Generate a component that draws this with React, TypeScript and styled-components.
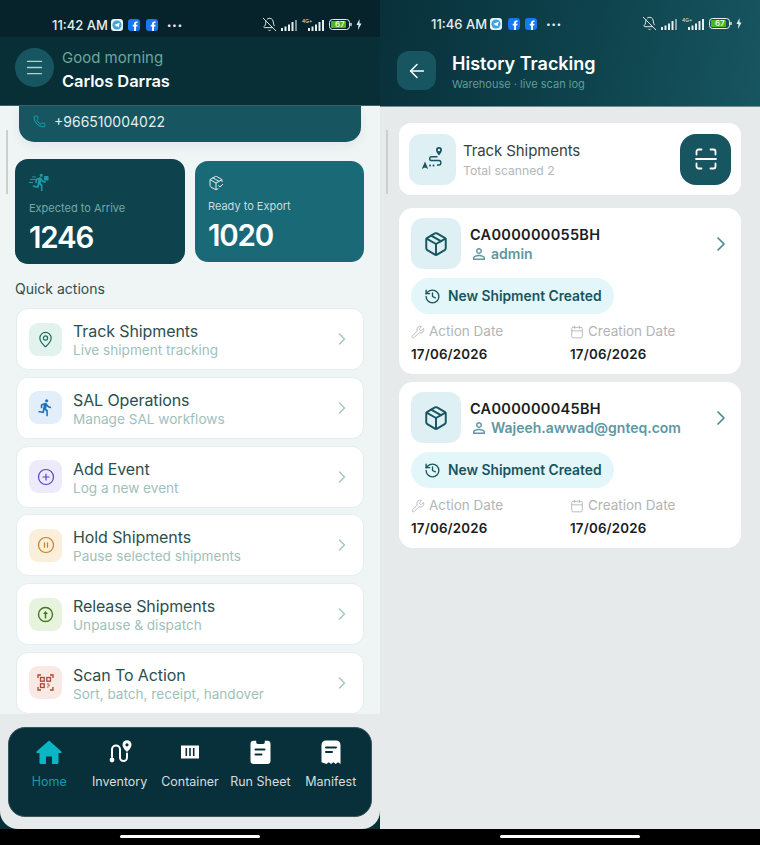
import React from "react";
import styled, { createGlobalStyle } from "styled-components";
import { ArrowLeft, Calendar, ChevronRight, CirclePause, CirclePlus, History, Menu, Package, PackageCheck, Phone, MapPin, Wrench, BellOff } from "lucide-react";
import { MdDirectionsRun, MdPersonOutline } from "react-icons/md";

const Global = createGlobalStyle`
  html, body { margin: 0; padding: 0; background: #000; }
  body { font-family: "Inter", "Open Sans", sans-serif; }
  * { box-sizing: border-box; }
`;

const Page = styled.div`
  width: 760px; height: 845px; display: grid; grid-template-columns: 380px 380px; overflow: hidden;
`;
const Phone_ = styled.div`
  position: relative; height: 845px; display: flex; flex-direction: column; background: #000; overflow: hidden;
`;
const Screen = styled.div`
  height: 829px; display: flex; flex-direction: column;
`;
const HomeBar = styled.div`
  height: 16px; background: #000; display: flex; justify-content: center; padding-top: 6px; flex: none;
  &::after { content: ""; width: 140px; height: 3px; border-radius: 2px; background: #fff; }
`;
const Status = styled.div<{ $bg?: string; $pl: number; $pt: number }>`
  height: 37px; flex: none; display: flex; align-items: center; padding: ${p => p.$pt}px 18px 0 ${p => p.$pl}px; background: ${p => p.$bg || "transparent"};
  color: #e6eeee; font-size: 13px; font-weight: 500;
`;
const Time = styled.span` margin-right: 3px; `;
const AppDot = styled.span`
  width: 12px; height: 12px; margin-right: 5.5px; display: inline-flex; align-items: center; justify-content: center;
`;
const Dots = styled.span`
  margin-left: 4px; letter-spacing: 1.5px; font-size: 8px; font-weight: 700;
`;
const Right = styled.div`
  margin-left: auto; display: flex; align-items: center; gap: 4px;
`;

const TopBar = styled.div`
  height: 69px; flex: none; background: #082e36; border-bottom: 1px solid #3d5f66; display: flex; align-items: center; padding: 0 15px 8px; gap: 8px;
`;
const Round = styled.div`
  width: 39px; height: 39px; border-radius: 50%; background: #175560; color: #a9d6d0; display: flex; align-items: center; justify-content: center;
`;
const Greet = styled.div` padding-top: 6px; `;
const Greeting = styled.div`
  color: #6aa79f; font-size: 15px; line-height: 18px; margin-bottom: 3px;
`;
const Name = styled.div`
  color: #fff; font-size: 16.5px; line-height: 22px; font-weight: 600; letter-spacing: -.1px;
`;
const Content = styled.div`
  flex: 1; min-height: 0; background: #eff4f5; padding: 0 16px; display: flex; flex-direction: column; overflow: hidden;
`;
const PhoneCard = styled.div`
  flex: none; margin: 0 3px; height: 36px; background: #175560; border-radius: 0 0 15px 15px; display: flex; align-items: center;
  padding: 0 0 6px 14px; gap: 8px; color: #e3eeee; font-size: 14px; box-shadow: 0 4px 12px rgba(8,46,54,.06);
`;
const Stats = styled.div`
  display: grid; grid-template-columns: 170px 169px; gap: 10px; margin: 17px 0 0 -1px; align-items: center; height: 105px;
`;
const Stat = styled.div<{ $big?: boolean }>`
  height: ${p => (p.$big ? "105px" : "101px")}; border-radius: 13px; background: ${p => (p.$big ? "#0e424c" : "#1a6976")}; padding: ${p => (p.$big ? "13px 14px" : "14px 13px")} 0;
  display: flex; flex-direction: column;
`;
const StatLabel = styled.div<{ $light?: boolean }>`
  font-size: 11px; line-height: 14px; margin-top: ${p => (p.$light ? "8px" : "9px")}; color: ${p => (p.$light ? "#c6dedf" : "#72aaa6")};
`;
const StatValue = styled.div`
  font-size: 29.5px; line-height: 34px; font-weight: 600; color: #fff; margin-top: 5px; letter-spacing: -1.2px;
`;
const SectionTitle = styled.div`
  margin: 16px 0 11px -1px; color: #2d4f4f; font-size: 14px; line-height: 17px;
`;
const List = styled.div`
  display: flex; flex-direction: column; gap: 6.8px;
`;
const Action = styled.div`
  height: 62px; flex: none; background: #fff; border: 1px solid #e4eeee; border-radius: 12px; display: flex; align-items: center; padding: 0 11px 0 12px; gap: 11px;
`;
const ActionIcon = styled.div<{ $bg: string; $fg: string }>`
  width: 33px; height: 33px; border-radius: 9px; background: ${p => p.$bg}; color: ${p => p.$fg}; display: flex; align-items: center; justify-content: center; flex: none;
`;
const ActionText = styled.div` flex: 1; min-width: 0; padding-top: 3px; `;
const ActionTitle = styled.div`
  color: #2c4f4e; font-size: 16px; line-height: 19px; font-weight: 400; letter-spacing: -.1px;
`;
const ActionSub = styled.div`
  color: #a0c1bb; font-size: 13.6px; line-height: 17px; margin-top: 1px;
`;
const Chevron = styled(ChevronRight)` color: #a3c7c0; flex: none; `;

const NavWrap = styled.div`
  flex: none; height: 115px; background: #082e36;
`;
const NavInner = styled.div`
  height: 115px; background: #e6eaeb; border-radius: 0 0 18px 18px; padding: 13px 8px 12px;
`;
const Nav = styled.div`
  height: 90px; background: #08303a; border-radius: 17px; border: 1px solid #39565c; display: grid; grid-template-columns: repeat(5, 70.4px); padding: 10px 5px 0 5px;
`;
const NavItem = styled.div<{ $active?: boolean }>`
  display: flex; flex-direction: column; align-items: center; color: ${p => (p.$active ? "#0bb5c4" : "#fff")};
`;
const NavIconBox = styled.div`
  height: 28px; display: flex; align-items: center; justify-content: center;
`;
const NavLabel = styled.div<{ $active?: boolean }>`
  margin-top: 8px; font-size: 12.5px; line-height: 16px; white-space: nowrap; color: ${p => (p.$active ? "#0e9eae" : "#d5dedf")};
`;

const Scrollbar = styled.div`
  position: absolute; left: 6px; top: 130px; height: 64px; width: 2px; background: #c9cfd0;
`;

const GradientHead = styled.div`
  height: 107px; flex: none; background: linear-gradient(100deg, #08303a 0%, #0e434d 55%, #175560 100%); border-bottom: 1px solid #6f8d93; display: flex; flex-direction: column;
`;
const HeadRow = styled.div`
  display: flex; align-items: center; padding: 15px 0 0 17px; gap: 16px; margin-top: -3px;
`;
const BackBtn = styled.div`
  width: 39px; height: 39px; border-radius: 12px; background: #175560; color: #fff; display: flex; align-items: center; justify-content: center;
`;
const HeadText = styled.div` padding-top: 3px; `;
const HeadTitle = styled.div`
  color: #fff; font-size: 18px; line-height: 24px; font-weight: 600;
`;
const HeadSub = styled.div`
  color: #5f9c98; font-size: 11px; line-height: 15px; margin-top: 1px;
`;
const RightBody = styled.div`
  flex: 1; background: #e6eaeb; padding: 16px 19px 0; display: flex; flex-direction: column;
`;
const Summary = styled.div`
  height: 72px; background: #fff; border-radius: 12px; display: flex; align-items: center; padding: 0 10px; gap: 7px; margin-bottom: 13px;
`;
const IconTile = styled.div<{ $w: number }>`
  width: ${p => p.$w}px; height: 51px; border-radius: 12px; background: #dff0f5; color: #175560; display: flex; align-items: center; justify-content: center; flex: none;
`;
const SummaryTitle = styled.div`
  color: #3a3f40; font-size: 15px; line-height: 19px; font-weight: 400; letter-spacing: -.1px;
`;
const SummarySub = styled.div`
  color: #b3b8b8; font-size: 12.2px; line-height: 15px; margin-top: 3px;
`;
const ScanBtn = styled.div`
  margin-left: auto; width: 51px; height: 51px; border-radius: 16px; background: #175560; color: #fff; display: flex; align-items: center; justify-content: center;
`;
const Card = styled.div`
  height: 166px; background: #fff; border-radius: 14px; padding: 10px 12px 0; margin-bottom: 8px; display: flex; flex-direction: column;
`;
const CardTop = styled.div`
  display: flex; align-items: center; gap: 9px;
`;
const CardMain = styled.div` flex: 1; padding-top: 1px; `;
const Code = styled.div`
  color: #1b1d1e; font-size: 14.5px; line-height: 19px; font-weight: 600; letter-spacing: .3px;
`;
const Owner = styled.div`
  display: flex; align-items: center; gap: 3px; color: #5e98a3; font-size: 14px; line-height: 20px; font-weight: 600;
`;
const CardChevron = styled(ChevronRight)` color: #4d8793; flex: none; margin-right: -4px; `;
const Pill = styled.div`
  align-self: flex-start; margin-top: 9px; height: 36px; padding: 0 12px 0 13px; border-radius: 18px; background: #e3f6fa; color: #175560; display: flex; align-items: center; gap: 7px; font-size: 13.8px; font-weight: 600;
`;
const Dates = styled.div`
  display: grid; grid-template-columns: 159px 1fr; margin-top: 9px;
`;
const DateLabel = styled.div`
  display: flex; align-items: center; gap: 4px; color: #b1b5b5; font-size: 13.5px; line-height: 17px; font-weight: 400;
`;
const DateValue = styled.div`
  color: #1b1d1e; font-size: 13.3px; line-height: 17px; font-weight: 600; margin-top: 6px; letter-spacing: .2px;
`;

const Telegram = () => (
  <svg width="12" height="12" viewBox="0 0 12 12"><rect width="12" height="12" rx="3" fill="#e9f4fb" /><circle cx="6" cy="6" r="4.6" fill="#3ea3dc" /><path d="M3 6l5.600-2.200-.9 4.600-1.800-1.300-1 .9-.2-1.500z" fill="#fff" /></svg>
);
const Fb = () => (
  <svg width="12" height="12" viewBox="0 0 12 12"><rect width="12" height="12" rx="3" fill="#1877f2" /><path d="M8 12V7.400h1.300l.2-1.700H8V4.800c0-.5.2-.8.8-.8h.8V2.500C9.300 2.400 8.800 2.400 8.300 2.400 7 2.400 6.100 3.200 6.100 4.600v1.100H4.700v1.700h1.400V12z" fill="#fff" /></svg>
);
const Signal = ({ small }: { small?: boolean }) => (
  <svg width="17" height="12" viewBox="0 0 17 12" fill="#e6eeee">
    <rect x="0" y="9" width="2" height="3" /><rect x="3.500" y="7.500" width="2" height="4.500" /><rect x="7" y="5.500" width="2" height="6.500" /><rect x="10.500" y="3" width="2" height="9" /><rect x="14" y="1" width="2" height="11" opacity={small ? 0.55 : 1} />
  </svg>
);
const Battery = () => (
  <svg width="23" height="11" viewBox="0 0 23 11"><rect x=".5" y=".5" width="20" height="10" rx="3" fill="none" stroke="#e6eeee" /><rect x="2" y="2" width="15" height="7" rx="1" fill="#4cb51f" /><rect x="21.300" y="3.700" width="1.400" height="3.600" rx=".7" fill="#e6eeee" /></svg>
);
const Bolt = () => (<svg width="6" height="11" viewBox="0 0 6 11"><path d="M3.500 0L.5 6h2L2 11l3.500-6.500H3.500z" fill="#e6eeee" /></svg>);
const BatteryWrap = styled.span`
  position: relative; display: inline-flex;
`;
const BatteryNum = styled.span`
  position: absolute; left: 6px; top: 0; font-size: 8px; line-height: 11px; color: #e8f5d8; font-weight: 600;
`;
const NetLabel = styled.span`
  font-size: 5px; line-height: 5px; color: #cfd9da; width: 10px; margin-right: -8px; position: relative; z-index: 1; transform: translateY(-3px);
`;

const StatusBar = ({ time, bg, pl, pt }: { time: string; bg?: string; pl: number; pt: number }) => (
  <Status $bg={bg} $pl={pl} $pt={pt}>
    <Time>{time}</Time>
    <AppDot><Telegram /></AppDot><AppDot><Fb /></AppDot><AppDot><Fb /></AppDot>
    <Dots>•••</Dots>
    <Right>
      <BellOff size={15} strokeWidth={1.500} />
      <Signal small />
      <NetLabel>4G+</NetLabel>
      <Signal />
      <BatteryWrap><Battery /><BatteryNum>67</BatteryNum></BatteryWrap>
      <Bolt />
    </Right>
  </Status>
);

const Runner = () => (
  <svg width="20" height="20" viewBox="0 0 20 20" fill="#1a9aa6">
    <path transform="translate(1.500 .5) scale(.8)" d="M13.490 5.480c1.100 0 2-.9 2-2s-.9-2-2-2-2 .9-2 2 .9 2 2 2zm-3.600 13.900l1-4.400 2.100 2v6h2v-7.500l-2.100-2 .6-3c1.300 1.500 3.300 2.500 5.500 2.500v-2c-1.900 0-3.500-1-4.300-2.400l-1-1.600c-.4-.6-1-1-1.700-1-.3 0-.5.1-.8.1l-5.200 2.200v4.700h2v-3.400l1.800-.7-1.600 8.100-4.900-1-.4 2 7 1.400z" />
    <rect x="15" y="4" width="4.500" height="4.500" rx=".6" />
    <path d="M3 4.500h4v1H3zM1 7h5v1H1zM0 10h4v1H0z" />
  </svg>
);

const Route2 = ({ size = 24, color = "currentColor" }: { size?: number; color?: string }) => (
  <svg width={size} height={size} viewBox="0 0 24 24" fill="none" stroke={color} strokeWidth="2" strokeLinecap="round">
    <circle cx="4" cy="20" r="2.400" fill={color} stroke="none" />
    <path d="M4 17V9.500a4 4 0 0 1 8 0v8a3.500 3.500 0 0 0 7 0v-4" />
    <path d="M19 12s-4.500-4-4.500-7.300a4.500 4.500 0 0 1 9 0C23.500 8 19 12 19 12z" fill={color} stroke="none" />
    <circle cx="19" cy="4.800" r="1.600" fill="#08303a" stroke="none" />
  </svg>
);
const HomeIcon = () => (
  <svg width="26" height="26" viewBox="0 0 26 26" fill="currentColor">
    <path d="M13 1.500L.5 12.500c-.5.600 0 1.500.8 1.500H3.500v9.500c0 1 .8 1.500 1.500 1.500h5v-7.500h6V25h5c.8 0 1.500-.6 1.500-1.500V14h2.200c.8 0 1.300-1 .7-1.500z" />
  </svg>
);
const ContainerIcon = () => (
  <svg width="18" height="14" viewBox="0 0 18 14"><path d="M0 .5h18v13H0z" fill="#fff" /><path d="M4.500 3h1.600v8H4.500zM8.200 3h1.600v8H8.200zM11.900 3h1.600v8h-1.600z" fill="#08303a" /></svg>
);
const ClipIcon = () => (
  <svg width="21" height="24" viewBox="0 0 21 24" fill="none"><path d="M3.500.8h2.700v1.500c0 1 .8 1.700 1.700 1.700h5.200c1 0 1.700-.8 1.700-1.700V.8h2.700c1.800 0 3 1.200 3 3V21c0 1.800-1.200 3-3 3H3.500c-1.800 0-3-1.200-3-3V3.800c0-1.800 1.200-3 3-3z" fill="#fff" /><path d="M5.500 9.500h9M5.500 14.500h6" stroke="#08303a" strokeWidth="2" strokeLinecap="round" /></svg>
);
const ManifestIcon = () => (
  <svg width="20" height="24" viewBox="0 0 20 24" fill="none"><path d="M5 .5h10c2.800 0 4.500 1.800 4.500 4.500v19l-2.500-1.800-2.300 1.800-2.300-1.800-2.400 1.800-2.300-1.800-2.300 1.800L.5 22.200V5C.5 2.300 2.200.5 5 .5z" fill="#fff" /><path d="M5 7.500h10M5 12h6" stroke="#08303a" strokeWidth="2" strokeLinecap="round" /></svg>
);
const QrIcon = () => (
  <svg width="17" height="17" viewBox="0 0 17 17" fill="none" stroke="#a8482f" strokeWidth="1.300">
    <path d="M1 4V1h3M13 1h3v3M16 13v3h-3M4 16H1v-3" />
    <rect x="3.500" y="3.500" width="3.700" height="3.700" /><rect x="9.800" y="3.500" width="3.700" height="3.700" /><rect x="3.500" y="9.800" width="3.700" height="3.700" />
    <path d="M10 10h1.500v1.500H13M10 13h1.500" strokeOpacity=".6" />
  </svg>
);
const UpCircle = () => (
  <svg width="17" height="17" viewBox="0 0 17 17" fill="none" stroke="currentColor" strokeWidth="1.400"><circle cx="8.500" cy="8.500" r="7" /><path d="M8.500 12.500V7" strokeWidth="1.500" /><path d="M6 8l2.500-3L11 8z" fill="currentColor" stroke="none" /></svg>
);
const TrackGlyph = () => (
  <svg width="24" height="24" viewBox="0 0 24 24" fill="#175560">
    <path d="M18 0a3 3 0 0 0-3 3c0 2.200 3 5.500 3 5.500s3-3.300 3-5.500a3 3 0 0 0-3-3zm0 4.200a1.200 1.200 0 1 1 0-2.400 1.200 1.200 0 0 1 0 2.400z" />
    <path d="M4 14.500l3.200 7.500-3.200-1.500L.8 22z" />
    <path d="M16.500 9.800H10.500c-2.400 0-2.400 3.700 0 3.700h7.500c2.500 0 2.500 4.500 0 4.500H16" fill="none" stroke="#175560" strokeWidth="1.400" />
    <circle cx="9" cy="18.500" r="1" /><circle cx="12.500" cy="18.500" r="1" />
  </svg>
);
const ScanGlyph = () => (
  <svg width="22" height="22" viewBox="0 0 22 22" fill="none" stroke="#fff" strokeWidth="1.800" strokeLinecap="round">
    <path d="M1.500 6.500V3.500a2 2 0 0 1 2-2h3M15.500 1.500h3a2 2 0 0 1 2 2v3M20.500 15.500v3a2 2 0 0 1-2 2h-3M6.500 20.500h-3a2 2 0 0 1-2-2v-3M1 11h20" />
  </svg>
);

const actions = [
  { t: "Track Shipments", s: "Live shipment tracking", bg: "#e1f3ec", fg: "#1e6b5c", i: <MapPin size={17} strokeWidth={1.7} /> },
  { t: "SAL Operations", s: "Manage SAL workflows", bg: "#e2eef9", fg: "#2270b8", i: <MdDirectionsRun size={19} /> },
  { t: "Add Event", s: "Log a new event", bg: "#edeafc", fg: "#5546b8", i: <CirclePlus size={18} strokeWidth={1.6} /> },
  { t: "Hold Shipments", s: "Pause selected shipments", bg: "#fbeeda", fg: "#c47f2a", i: <CirclePause size={18} strokeWidth={1.6} /> },
  { t: "Release Shipments", s: "Unpause & dispatch", bg: "#e8f3de", fg: "#3f7a1c", i: <UpCircle /> },
  { t: "Scan To Action", s: "Sort, batch, receipt, handover", bg: "#f9e9e4", fg: "#a8482f", i: <QrIcon /> },
];
const nav = [
  { l: "Home", i: <HomeIcon />, a: true },
  { l: "Inventory", i: <Route2 /> },
  { l: "Container", i: <ContainerIcon /> },
  { l: "Run Sheet", i: <ClipIcon /> },
  { l: "Manifest", i: <ManifestIcon /> },
];
const cards = [
  { code: "CA000000055BH", owner: "admin" },
  { code: "CA000000045BH", owner: "Wajeeh.awwad@gnteq.com" },
];

export default function App() {
  return (
    <Page>
      <Global />
      <Phone_>
        <Screen>
          <StatusBar time="11:42 AM" bg="#06232b" pl={52} pt={12} />
          <TopBar>
            <Round><Menu size={21} strokeWidth={1.5} /></Round>
            <Greet>
              <Greeting>Good morning</Greeting>
              <Name>Carlos Darras</Name>
            </Greet>
          </TopBar>
          <Content>
            <PhoneCard><Phone size={13} color="#12a5b4" strokeWidth={1.8} />+966510004022</PhoneCard>
            <Stats>
              <Stat $big>
                <Runner />
                <StatLabel>Expected to Arrive</StatLabel>
                <StatValue>1246</StatValue>
              </Stat>
              <Stat>
                <PackageCheck size={16} color="#e5f1f1" strokeWidth={1.5} />
                <StatLabel $light>Ready to Export</StatLabel>
                <StatValue>1020</StatValue>
              </Stat>
            </Stats>
            <SectionTitle>Quick actions</SectionTitle>
            <List>
              {actions.map(a => (
                <Action key={a.t}>
                  <ActionIcon $bg={a.bg} $fg={a.fg}>{a.i}</ActionIcon>
                  <ActionText>
                    <ActionTitle>{a.t}</ActionTitle>
                    <ActionSub>{a.s}</ActionSub>
                  </ActionText>
                  <Chevron size={20} strokeWidth={1.7} />
                </Action>
              ))}
            </List>
          </Content>
          <NavWrap>
            <NavInner>
              <Nav>
                {nav.map(n => (
                  <NavItem key={n.l} $active={n.a}>
                    <NavIconBox>{n.i}</NavIconBox>
                    <NavLabel $active={n.a}>{n.l}</NavLabel>
                  </NavItem>
                ))}
              </Nav>
            </NavInner>
          </NavWrap>
        </Screen>
        <HomeBar />
        <Scrollbar />
      </Phone_>
      <Phone_>
        <Screen>
          <GradientHead>
            <StatusBar time="11:46 AM" pl={51} pt={10} />
            <HeadRow>
              <BackBtn><ArrowLeft size={22} strokeWidth={1.6} /></BackBtn>
              <HeadText>
                <HeadTitle>History Tracking</HeadTitle>
                <HeadSub>Warehouse · live scan log</HeadSub>
              </HeadText>
            </HeadRow>
          </GradientHead>
          <RightBody>
            <Summary>
              <IconTile $w={47}><TrackGlyph /></IconTile>
              <div>
                <SummaryTitle>Track Shipments</SummaryTitle>
                <SummarySub>Total scanned 2</SummarySub>
              </div>
              <ScanBtn><ScanGlyph /></ScanBtn>
            </Summary>
            {cards.map(c => (
              <Card key={c.code}>
                <CardTop>
                  <IconTile $w={50}><Package size={26} strokeWidth={1.8} /></IconTile>
                  <CardMain>
                    <Code>{c.code}</Code>
                    <Owner><MdPersonOutline size={18} />{c.owner}</Owner>
                  </CardMain>
                  <CardChevron size={24} strokeWidth={1.7} />
                </CardTop>
                <Pill><History size={17} strokeWidth={1.9} />New Shipment Created</Pill>
                <Dates>
                  <div>
                    <DateLabel><Wrench size={14} strokeWidth={1.5} />Action Date</DateLabel>
                    <DateValue>17/06/2026</DateValue>
                  </div>
                  <div>
                    <DateLabel><Calendar size={14} strokeWidth={1.5} />Creation Date</DateLabel>
                    <DateValue>17/06/2026</DateValue>
                  </div>
                </Dates>
              </Card>
            ))}
          </RightBody>
        </Screen>
        <HomeBar />
        <Scrollbar />
      </Phone_>
    </Page>
  );
}
